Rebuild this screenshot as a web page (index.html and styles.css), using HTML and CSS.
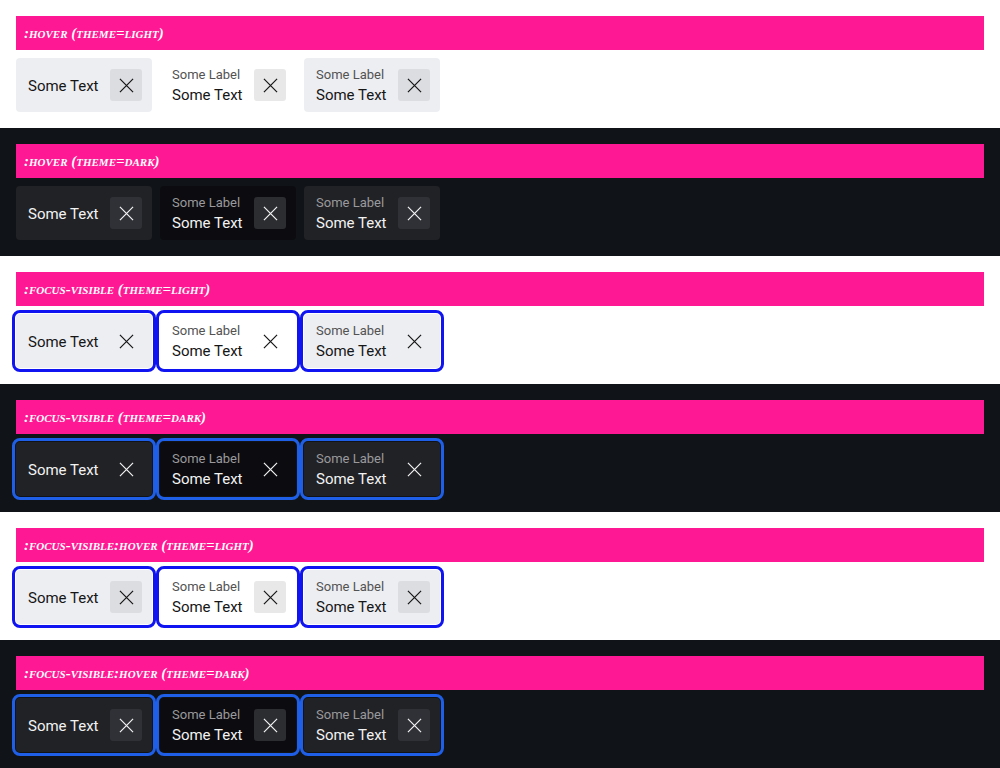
FILE: index.html
```html
<!DOCTYPE html>
<html>
<head>
<meta charset="utf-8">
<link rel="stylesheet" href="styles.css">
</head>
<body>
<section class="sec light">
  <div class="hdr">:hover (theme=light)</div>
  <div class="row">
    <div class="chip filled"><span class="txt">Some Text</span><span class="btn hov"><svg viewBox="0 0 16 16"><path d="M1 1L15 15M15 1L1 15"/></svg></span></div>
    <div class="chip ghost"><span class="stack"><span class="lbl">Some Label</span><span class="txt">Some Text</span></span><span class="btn hov"><svg viewBox="0 0 16 16"><path d="M1 1L15 15M15 1L1 15"/></svg></span></div>
    <div class="chip filled"><span class="stack"><span class="lbl">Some Label</span><span class="txt">Some Text</span></span><span class="btn hov"><svg viewBox="0 0 16 16"><path d="M1 1L15 15M15 1L1 15"/></svg></span></div>
  </div>
</section>
<section class="sec dark">
  <div class="hdr">:hover (theme=dark)</div>
  <div class="row">
    <div class="chip filled"><span class="txt">Some Text</span><span class="btn hov"><svg viewBox="0 0 16 16"><path d="M1 1L15 15M15 1L1 15"/></svg></span></div>
    <div class="chip ghost"><span class="stack"><span class="lbl">Some Label</span><span class="txt">Some Text</span></span><span class="btn hov"><svg viewBox="0 0 16 16"><path d="M1 1L15 15M15 1L1 15"/></svg></span></div>
    <div class="chip filled"><span class="stack"><span class="lbl">Some Label</span><span class="txt">Some Text</span></span><span class="btn hov"><svg viewBox="0 0 16 16"><path d="M1 1L15 15M15 1L1 15"/></svg></span></div>
  </div>
</section>
<section class="sec light">
  <div class="hdr">:focus-visible (theme=light)</div>
  <div class="row">
    <div class="chip filled focus"><span class="txt">Some Text</span><span class="btn"><svg viewBox="0 0 16 16"><path d="M1 1L15 15M15 1L1 15"/></svg></span></div>
    <div class="chip ghost focus"><span class="stack"><span class="lbl">Some Label</span><span class="txt">Some Text</span></span><span class="btn"><svg viewBox="0 0 16 16"><path d="M1 1L15 15M15 1L1 15"/></svg></span></div>
    <div class="chip filled focus"><span class="stack"><span class="lbl">Some Label</span><span class="txt">Some Text</span></span><span class="btn"><svg viewBox="0 0 16 16"><path d="M1 1L15 15M15 1L1 15"/></svg></span></div>
  </div>
</section>
<section class="sec dark">
  <div class="hdr">:focus-visible (theme=dark)</div>
  <div class="row">
    <div class="chip filled focus"><span class="txt">Some Text</span><span class="btn"><svg viewBox="0 0 16 16"><path d="M1 1L15 15M15 1L1 15"/></svg></span></div>
    <div class="chip ghost focus"><span class="stack"><span class="lbl">Some Label</span><span class="txt">Some Text</span></span><span class="btn"><svg viewBox="0 0 16 16"><path d="M1 1L15 15M15 1L1 15"/></svg></span></div>
    <div class="chip filled focus"><span class="stack"><span class="lbl">Some Label</span><span class="txt">Some Text</span></span><span class="btn"><svg viewBox="0 0 16 16"><path d="M1 1L15 15M15 1L1 15"/></svg></span></div>
  </div>
</section>
<section class="sec light">
  <div class="hdr">:focus-visible:hover (theme=light)</div>
  <div class="row">
    <div class="chip filled focus"><span class="txt">Some Text</span><span class="btn hov"><svg viewBox="0 0 16 16"><path d="M1 1L15 15M15 1L1 15"/></svg></span></div>
    <div class="chip ghost focus"><span class="stack"><span class="lbl">Some Label</span><span class="txt">Some Text</span></span><span class="btn hov"><svg viewBox="0 0 16 16"><path d="M1 1L15 15M15 1L1 15"/></svg></span></div>
    <div class="chip filled focus"><span class="stack"><span class="lbl">Some Label</span><span class="txt">Some Text</span></span><span class="btn hov"><svg viewBox="0 0 16 16"><path d="M1 1L15 15M15 1L1 15"/></svg></span></div>
  </div>
</section>
<section class="sec dark">
  <div class="hdr">:focus-visible:hover (theme=dark)</div>
  <div class="row">
    <div class="chip filled focus"><span class="txt">Some Text</span><span class="btn hov"><svg viewBox="0 0 16 16"><path d="M1 1L15 15M15 1L1 15"/></svg></span></div>
    <div class="chip ghost focus"><span class="stack"><span class="lbl">Some Label</span><span class="txt">Some Text</span></span><span class="btn hov"><svg viewBox="0 0 16 16"><path d="M1 1L15 15M15 1L1 15"/></svg></span></div>
    <div class="chip filled focus"><span class="stack"><span class="lbl">Some Label</span><span class="txt">Some Text</span></span><span class="btn hov"><svg viewBox="0 0 16 16"><path d="M1 1L15 15M15 1L1 15"/></svg></span></div>
  </div>
</section>
</body>
</html>
```
FILE: styles.css
```css
html, body { margin: 0; padding: 0; }
body { font-family: Roboto, "Liberation Sans", sans-serif; }

.sec { padding: 16px; height: 96px; }
.light { background: #ffffff; --chip: #edeef2; --ghost: #ffffff; --hov: #dcdde1; --ghosthov: #e8e8e8; --txt: #161616; --lbl: #525252; --ring: #0f14f0; }
.dark { background: #101418; --chip: #212226; --ghost: #0c0c10; --hov: #303136; --ghosthov: #2c2d31; --txt: #f2f2f2; --lbl: #9a9a9c; --ring: #1f5fe8; }

.hdr {
  height: 34px;
  background: #ff1893;
  color: #ffffff;
  font-family: "Liberation Serif", serif;
  font-style: italic;
  font-weight: bold;
  font-variant: small-caps;
  font-size: 15px;
  line-height: 35px;
  padding-left: 8px;
}

.row { display: flex; gap: 8px; margin-top: 8px; }

.chip {
  width: 136px;
  height: 54px;
  box-sizing: border-box;
  padding: 0 10px 0 12px;
  border-radius: 4px;
  display: flex;
  align-items: center;
  justify-content: space-between;
  color: var(--txt);
}
.filled { background: var(--chip); }
.ghost { background: var(--ghost); }
.focus { outline: 3px solid var(--ring); outline-offset: 1px; }

.stack { display: flex; flex-direction: column; padding-top: 1px; }
.txt { font-size: 15px; line-height: 20px; }
.stack .txt { margin-top: 2px; }
.chip > .txt { padding-top: 2px; }
.lbl { font-size: 13px; line-height: 16px; color: var(--lbl); }

.btn {
  width: 32px;
  height: 32px;
  border-radius: 3px;
  display: flex;
  align-items: center;
  justify-content: center;
}
.filled .btn.hov { background: var(--hov); }
.ghost .btn.hov { background: var(--ghosthov); }
.btn svg { width: 15px; height: 15px; }
.btn path { stroke: var(--txt); stroke-width: 1.3; fill: none; }
```
